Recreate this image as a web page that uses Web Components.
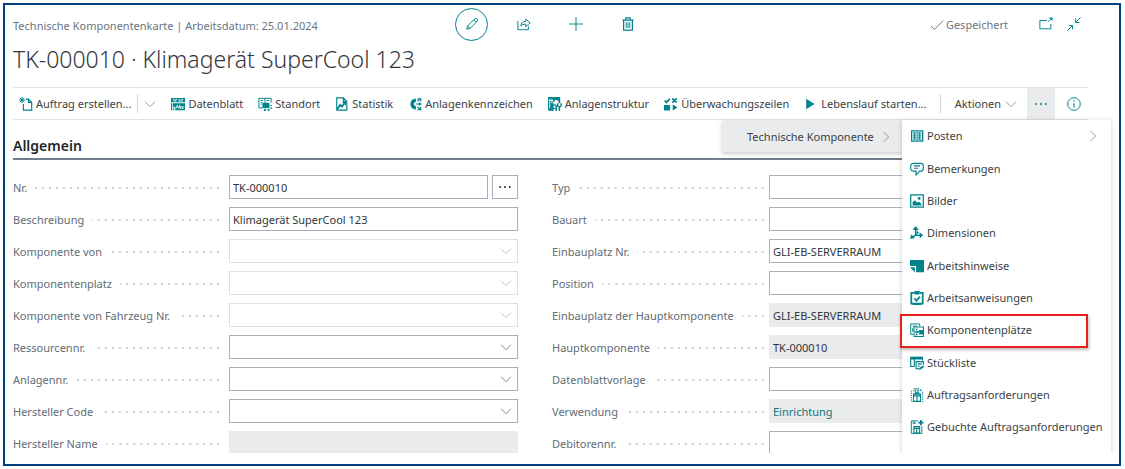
<!DOCTYPE html>
<html lang="de">
<head>
<meta charset="utf-8">
<meta name="viewport" content="width=device-width, initial-scale=1">
<title>Technische Komponentenkarte</title>
<style>
  :root {
    --teal: #00838a;
    --text: #3a3f45;
    --muted: #6a7582;
    --label: #626c77;
    --line: #e0e2e4;
    --shade: #eaebed;
    --border: #a9b0bb;
  }
  body { margin: 3px 4px 3px 3px; background: #fff; color: var(--text); font: 11px/16px "Noto Sans", "Open Sans", sans-serif; }
</style>
</head>
<body>
<bc-card-page>
  <bc-page-header slot="header"></bc-page-header>
  <bc-toolbar slot="toolbar"></bc-toolbar>
  <bc-fast-tab heading="Allgemein">
    <bc-field slot="left" label="Nr." value="TK-000010" kind="assist"></bc-field>
    <bc-field slot="left" label="Beschreibung" value="Klimagerät SuperCool 123"></bc-field>
    <bc-field slot="left" label="Komponente von" kind="lookup" disabled></bc-field>
    <bc-field slot="left" label="Komponentenplatz" kind="lookup" disabled></bc-field>
    <bc-field slot="left" label="Komponente von Fahrzeug Nr." kind="lookup" disabled></bc-field>
    <bc-field slot="left" label="Ressourcennr." kind="lookup"></bc-field>
    <bc-field slot="left" label="Anlagennr." kind="lookup"></bc-field>
    <bc-field slot="left" label="Hersteller Code" kind="lookup"></bc-field>
    <bc-field slot="left" label="Hersteller Name" kind="readonly"></bc-field>
    <bc-field slot="right" label="Typ"></bc-field>
    <bc-field slot="right" label="Bauart"></bc-field>
    <bc-field slot="right" label="Einbauplatz Nr." value="GLI-EB-SERVERRAUM"></bc-field>
    <bc-field slot="right" label="Position"></bc-field>
    <bc-field slot="right" label="Einbauplatz der Hauptkomponente" value="GLI-EB-SERVERRAUM" kind="readonly"></bc-field>
    <bc-field slot="right" label="Hauptkomponente" value="TK-000010" kind="readonly"></bc-field>
    <bc-field slot="right" label="Datenblattvorlage"></bc-field>
    <bc-field slot="right" label="Verwendung" value="Einrichtung" kind="link"></bc-field>
    <bc-field slot="right" label="Debitorennr."></bc-field>
  </bc-fast-tab>
</bc-card-page>

<script>
const ICONS = {
  pencil: '<path class="s" d="M2 14l1-3.800 8.200-8.200a1.600 1.600 0 0 1 2.300 0l.5.5a1.600 1.600 0 0 1 0 2.300L5.800 13zM3 10.200l2.800 2.800M10 3.200l2.800 2.800"/>',
  share: '<path class="s" d="M1 4.500v10h12v-4M4.500 10.500c0-4 2-5.500 5.500-5.500V2.200l5 4.500-5 4.300V8.200c-2.500 0-4.500.5-5.500 2.300z"/>',
  plus: '<path class="s" d="M8 0v16M0 8h16"/>',
  trash: '<path class="s" stroke-width="1.400" d="M1.500 3.500h13M5.500 3.500v-2.500h5v2.500M3 3.500v11.500h10v-11.500"/><path class="s" d="M6 6v6.500M8 6v6.500M10 6v6.500"/>',
  check: '<path class="s" d="M1 9l4 4L15 3"/>',
  popout: '<path class="s" d="M9 4H1v9.500h12.500V8M10.500 5.500L15 1"/><path d="M11.500.5H15.500V4.500z"/>',
  collapse: '<path class="s" d="M15.500.5L10 6M9.700 2v4.300H14M.5 15.500L6 10M2 9.700h4.300V14"/>',
  newdoc: '<path class="s" stroke-width="1.300" d="M8 2.500H10.800L14.500 6.200V15H5V8M10.800 2.500v3.700H14.500"/><path class="s" d="M3.500 0v7M0 3.500h7M1 1l5 5M6 1L1 6"/>',
  datasheet: '<path d="M0 1h16v5H0zM2 7h14v8H5v-4H2z"/><path d="M0 7h1.200v8H0zM2 12h2v1H2zM2 14h2v1H2z"/><path class="w" d="M2 3h2M5 3h2M9 2.500h1.500M12 3h2M3 4.500h3M8.500 4.500h5M6 13l1.300-3.500L8.600 13M10 9v4h1.500v-2H10M14.500 11H13v2h1.500"/>',
  location: '<path class="s" d="M1 1.500h14v5M1 1.500v11h4M8 1.500v5M3 4h3M3 6.500h2M10 4h3M3 9h1"/><path d="M5 6.500h8v6H5zM13.500 9H16v1h-2.500zM7 13.500h2V16H7zM11 13.500h2V16h-2zM14 12h2v1.500h-2z"/>',
  stats: '<path class="s" stroke-width="1.300" d="M9.500 1H2v14h11.500V5zM9.500 1v4h4"/><path class="s" stroke-width="2" d="M2.500 14l3.500-5 2 2 3-4.500"/><path d="M8 5.500H12.500V10z"/>',
  tagcode: '<path class="s" stroke-width="4" d="M9 3.700a4.300 4.300 0 1 0 0 8.600"/><path class="s" stroke-width="1.400" d="M10.500 5l3.500-3M11 2h3.500v3M9 8h5M12.500 6.500L14.500 8l-2 1.500M10.500 11l3.500 3M14.500 11v3.500H11"/>',
  structure: '<path d="M0 0h14v7h-2V4.500L9 3 6 6v3L4 15H0z"/><path class="w" d="M2 2v11M4.500 2v5M1 4h5"/><path class="s" stroke-width="1.600" d="M5.500 16v-5a2 2 0 0 1 4 0v5M4.500 13h4M11 7v3l2 2v4M15 7v3l-2 2"/><path d="M1 15h5v1H1z"/>',
  monitor: '<path class="s" stroke-width="2" d="M.8 4l2 2.200L6.700 2M9.500 1.500l5 5M14.500 1.500l-5 5"/><path d="M0 9h7v6.500H0zM10 8.500L15.500 12 10 15.500z"/>',
  play: '<path d="M2.500 2l9.500 6-9.500 6z"/>',
  chevdown: '<path class="s" d="M1.500 5L8 11.500 14.500 5"/>',
  chevright: '<path class="s" d="M4.500 1L11.500 8l-7 7"/>',
  dots: '<circle cx="2.500" cy="8" r="1.100"/><circle cx="8" cy="8" r="1.100"/><circle cx="13.500" cy="8" r="1.100"/>',
  info: '<circle class="s" cx="8" cy="8" r="7.200"/><path d="M7.400 7h1.300v5H7.400zM7.300 4h1.500v1.500H7.300z"/>',
  entries: '<path class="s" stroke-width="1.500" d="M1.800 2.200h12.700v11.600H1.800z"/><path class="s" d="M8.100 3v10M3.200 4.500h4M3.200 7h4M3.200 9.300h4M3.200 11.600h4M9 4.500h4M9 7h4M9 9.300h4M9 11.600h4M5.200 4v8M11 4v8"/>',
  comment: '<path class="s" stroke-width="1.300" d="M4 1.500h8a3.200 3.200 0 0 1 3.200 3.200v2.600A3.200 3.200 0 0 1 12 10.500h-1L7 15v-4.500H4A3.200 3.200 0 0 1 .8 7.300V4.700A3.200 3.200 0 0 1 4 1.500zM4.500 4.500h7M4.500 7.200h5"/>',
  picture: '<path class="s" stroke-width="1.400" d="M.8 1h14.400v14H.8z"/><path d="M3 13V9.500L5.500 7l3 3 1.500-1.500 3 3V13z"/><circle cx="10.500" cy="5" r="1.600"/>',
  dimensions: '<path class="s" stroke-width="1.800" d="M6.500 3v7.500H13M6.500 10.500L3 13"/><path d="M6.500 0L10 4.500H3zM15 10.500L11 14V7zM0 14.500l1.500-5 4 4.500zM7.500 5.500l3 2-3 2z"/>',
  note: '<path d="M0 1h16v14H7V8H0z"/><path d="M0 9.500h5.500V15z"/>',
  tasks: '<path class="s" stroke-width="2" d="M5 2H1.500v12.500h13V2H11"/><path d="M5 0h6v4H5zM3 14h10v2H3z"/><path class="s" stroke-width="2" d="M5 8.500l2.300 2.500L11.500 6.500"/>',
  places: '<path class="s" d="M3.500 13H.8V1H11v3M3 3.500h5M3 6v4"/><path class="s" stroke-width="1.200" d="M4.600 4.600h10.800v10.800H4.600z"/><path d="M10 8h5v5h-5l1-2.500zM6 6.500h3L7.500 8.500zM6 14h3L7.500 11.500zM6 9h4.500v2H6z"/>',
  bom: '<path class="s" stroke-width="1.300" d="M5 12H.8V1.500h13.400V5M5 2v10"/><path d="M1 1h13v3H1z"/><path class="s" stroke-width="1.300" d="M15.300 10V6.500H7v8h3M9 9h4.500M9 11.500h2"/><path d="M10 16l1-2.500L15 10.500l1 2-4 3z"/>',
  request: '<path class="s" stroke-dasharray="1.500 1" d="M3 15.300H1.500V3M4 .8h7l3.500 3.500v11H13M6 .8v4M9 .8v4M3.500 3h10"/><path class="s" stroke-width="1.300" d="M4 7h8v8.300H4zM4 9h8M8 9v6M6 7V5.500h4V7"/>',
  posted: '<path class="s" d="M9 1H1.500v14.300h12V7M3 3.500h4M4.500 1v4"/><path class="s" stroke-width="1.300" d="M4.500 7.500h6.500v7.500H4.500zM4.500 9.500H11M7.700 9.500V15"/><path class="s" stroke-width="2" d="M12.500 0v6M9.500 3h6"/>',
  list: '<path d="M2 0h8v2H2zM2 4h12v2H2zM2 8h12v8H2z"/>'
};

const define = (tag, css, render) => customElements.define(tag, class extends HTMLElement {
  connectedCallback() {
    if (this.shadowRoot) return;
    const root = this.attachShadow({ mode: 'open' });
    root.innerHTML = `<style>*{box-sizing:border-box}${css}</style>${render(this)}`;
  }
});
const attr = (el, name) => el.getAttribute(name) || '';

define('bc-icon', `
  :host { display: inline-flex; flex: none; width: 14px; height: 14px; color: var(--teal); }
  svg { width: 100%; height: 100%; overflow: visible; fill: currentColor; }
  .s { fill: none; stroke: currentColor; }
  .w { fill: none; stroke: #fff; }
`, el => `<svg viewBox="0 0 16 16" stroke-width="1.100" aria-hidden="true">${ICONS[attr(el, 'name')]}</svg>`);

define('bc-card-page', `
  :host { display: block; height: calc(100vh - 6px); box-sizing: border-box; border: 2px solid #004280; padding-bottom: 11px; }
  main { height: 100%; overflow: hidden; padding: 0 31px 0 8px; }
`, () => `<main><slot name="header"></slot><slot name="toolbar"></slot><slot></slot></main>`);

define('bc-page-header', `
  :host { display: block; }
  .top { display: grid; grid-template-columns: 442px 1fr auto; align-items: center; height: 38px; }
  .crumb { color: var(--muted); padding-top: 4px; }
  .actions { display: flex; align-items: center; gap: 20px; }
  button { display: flex; align-items: center; justify-content: center; width: 32px; height: 32px; padding: 0; border: 0; background: none; }
  button.active { width: 33px; height: 33px; border: 1px solid var(--teal); border-radius: 50%; }
  .status { display: flex; align-items: center; gap: 14px; padding-right: 7px; }
  .saved { display: flex; align-items: center; gap: 2px; color: var(--muted); margin-right: 17px; padding-top: 2px; }
  .saved bc-icon { color: var(--muted); }
  .status button { width: 14px; height: 14px; }
  h1 { margin: 0; height: 44px; font: 300 23px/32px "Noto Sans", "Open Sans", sans-serif; color: #33373c; }
`, () => `
  <div class="top">
    <div class="crumb">Technische Komponentenkarte | Arbeitsdatum: 25.01.2024</div>
    <div class="actions">
      <button class="active" aria-label="Bearbeiten"><bc-icon name="pencil"></bc-icon></button>
      <button aria-label="Teilen"><bc-icon name="share"></bc-icon></button>
      <button aria-label="Neu"><bc-icon name="plus"></bc-icon></button>
      <button aria-label="Löschen"><bc-icon name="trash"></bc-icon></button>
    </div>
    <div class="status">
      <span class="saved"><bc-icon name="check"></bc-icon>Gespeichert</span>
      <button aria-label="In neuem Fenster öffnen"><bc-icon name="popout"></bc-icon></button>
      <button aria-label="Verkleinern"><bc-icon name="collapse"></bc-icon></button>
    </div>
  </div>
  <h1>TK-000010 · Klimagerät SuperCool 123</h1>`);

define('bc-action', `
  :host { display: flex; }
  button { display: flex; align-items: center; gap: 3px; padding: 0; border: 0; background: none; color: inherit; font: inherit; white-space: nowrap; }
`, el => `<button><bc-icon name="${attr(el, 'icon')}"></bc-icon><slot></slot></button>`);

define('bc-toolbar', `
  :host { display: block; position: relative; z-index: 1; }
  nav { display: flex; align-items: stretch; height: 33px; padding-left: 6px; border: solid var(--line); border-width: 1px 0; }
  .actions { display: flex; align-items: center; gap: 15px; }
  .split { display: flex; align-items: center; gap: 6px; }
  .split button, .tail button { display: flex; align-items: center; justify-content: center; border: 0; padding: 0; background: none; color: inherit; font: inherit; }
  .rule { width: 1px; height: 19px; background: #d3d6da; }
  .split bc-icon, .menu bc-icon { width: 12px; height: 12px; color: #7c838c; }
  .split button { width: 12px; }
  .tail { display: flex; align-items: center; margin-left: auto; }
  .tail .menu { gap: 4px; margin: 0 10px 0 14px; }
  .tail .more { width: 28px; align-self: stretch; background: var(--shade); }
  .tail .info { width: 33px; height: 31px; padding-left: 4px; }
`, () => `
  <nav aria-label="Aktionen">
    <div class="actions">
      <div class="split">
        <bc-action icon="newdoc">Auftrag erstellen...</bc-action>
        <span class="rule"></span>
        <button aria-label="Weitere Optionen"><bc-icon name="chevdown"></bc-icon></button>
      </div>
      <bc-action icon="datasheet">Datenblatt</bc-action>
      <bc-action icon="location">Standort</bc-action>
      <bc-action icon="stats">Statistik</bc-action>
      <bc-action icon="tagcode">Anlagenkennzeichen</bc-action>
      <bc-action icon="structure">Anlagenstruktur</bc-action>
      <bc-action icon="monitor">Überwachungszeilen</bc-action>
      <bc-action icon="play">Lebenslauf starten...</bc-action>
    </div>
    <div class="tail">
      <span class="rule"></span>
      <button class="menu">Aktionen<bc-icon name="chevdown"></bc-icon></button>
      <button class="more" aria-label="Mehr Optionen" aria-expanded="true"><bc-icon name="dots"></bc-icon></button>
      <button class="info" aria-label="Info"><bc-icon name="info"></bc-icon></button>
    </div>
  </nav>
  <bc-flyout></bc-flyout>`);

define('bc-flyout', `
  :host { position: absolute; top: 33px; right: -23px; display: flex; align-items: flex-start; }
  .parent { display: flex; align-items: center; gap: 6px; width: 180px; height: 32px; padding: 2px 13px 0 25px; border: 0; background: var(--shade); color: inherit; font: inherit; white-space: nowrap; box-shadow: 0 2px 4px #0003; }
  .parent bc-icon { width: 12px; height: 12px; color: #7c838c; }
  .menu { position: relative; display: grid; grid-template-columns: 100%; grid-auto-rows: 1fr; width: 209px; min-height: 356px; background: #fff; box-shadow: 0 1px 5px #0003; }
`, () => `
  <button class="parent">Technische Komponente<bc-icon name="chevright"></bc-icon></button>
  <div class="menu">
    <bc-menu-item icon="entries" submenu>Posten</bc-menu-item>
    <bc-menu-item icon="comment">Bemerkungen</bc-menu-item>
    <bc-menu-item icon="picture">Bilder</bc-menu-item>
    <bc-menu-item icon="dimensions">Dimensionen</bc-menu-item>
    <bc-menu-item icon="note">Arbeitshinweise</bc-menu-item>
    <bc-menu-item icon="tasks">Arbeitsanweisungen</bc-menu-item>
    <bc-menu-item icon="places" marked>Komponentenplätze</bc-menu-item>
    <bc-menu-item icon="bom">Stückliste</bc-menu-item>
    <bc-menu-item icon="request">Auftragsanforderungen</bc-menu-item>
    <bc-menu-item icon="posted">Gebuchte Auftragsanforderungen</bc-menu-item>
    <bc-menu-item icon="list"></bc-menu-item>
  </div>`);

define('bc-menu-item', `
  :host { position: relative; display: flex; }
  button { flex: 1; display: flex; align-items: center; gap: 3px; padding: 0 6px 0 8px; border: 0; background: none; color: inherit; font: inherit; text-align: left; white-space: nowrap; }
  .more { width: 12px; height: 12px; margin: 0 6px 0 auto; color: #7c838c; }
  :host([marked])::after { content: ""; position: absolute; inset: 0 23px -1px -2px; border: 2px solid #e8201c; box-shadow: 1px 2px 3px #0004; }
`, el => `<button><bc-icon name="${attr(el, 'icon')}"></bc-icon><slot></slot>${el.hasAttribute('submenu') ? '<bc-icon class="more" name="chevright"></bc-icon>' : ''}</button>`);

define('bc-fast-tab', `
  :host { display: block; }
  h2 { margin: 0; padding-top: 16px; height: 40px; border-bottom: 2px solid #717c8c; font: 600 14px/20px "Noto Sans", "Open Sans", sans-serif; color: #22262b; }
  .grid { display: grid; grid-template-columns: 1fr 1fr; gap: 34px; padding: 15px 31px 0 0; }
  .col { display: grid; gap: 8px; align-content: start; }
  .left { --label-gap: 10px; }
  .right { --label-gap: 5px; --label-width: 212px; }
`, el => `
  <h2>${attr(el, 'heading')}</h2>
  <div class="grid">
    <div class="col left"><slot name="left"></slot></div>
    <div class="col right"><slot name="right"></slot></div>
  </div>`);

define('bc-field', `
  :host { display: grid; grid-template-columns: var(--label-width, 206px) 1fr; gap: var(--label-gap); height: 24px; }
  .caption { display: flex; align-items: center; gap: 8px; padding-top: 2px; }
  label { color: var(--label); white-space: nowrap; }
  .leader { flex: 1; height: 2px; background: linear-gradient(90deg, #0000 5px, #cdd1d5 5px) right / 7px 2px repeat-x; }
  .control { display: flex; gap: 4px; min-width: 0; position: relative; }
  input, select, .link { flex: 1; min-width: 0; height: 24px; margin: 0; padding: 1px 3px 0; border: 1px solid var(--border); border-radius: 0; background: #fff; color: #30353a; font: inherit; appearance: none; }
  select:disabled { border-color: #dcdfe3; opacity: 1; }
  input[readonly], .link { border-color: var(--shade); background: var(--shade); }
  .link { padding-top: 4px; line-height: 16px; }
  a { color: #14767c; text-decoration: none; }
  .assist { width: 26px; padding: 0; border: 1px solid var(--border); background: #fff; display: flex; align-items: center; justify-content: center; }
  .assist bc-icon { color: #222; width: 14px; height: 14px; }
  .chev { position: absolute; right: 6px; top: 6px; width: 12px; height: 12px; color: #666d75; pointer-events: none; }
  :host([disabled]) .chev { color: #b4b9bf; }
`, el => {
  const kind = attr(el, 'kind'), value = attr(el, 'value');
  const control = kind === 'lookup'
    ? `<select id="c"${el.hasAttribute('disabled') ? ' disabled' : ''}><option></option></select><bc-icon class="chev" name="chevdown"></bc-icon>`
    : kind === 'link'
    ? `<div class="link"><a id="c" href="#verwendung">${value}</a></div>`
    : `<input id="c" type="text" value="${value}"${kind === 'readonly' ? ' readonly' : ''}>`;
  return `<div class="caption"><label for="c">${attr(el, 'label')}</label><span class="leader"></span></div>
  <div class="control">${control}${kind === 'assist' ? '<button class="assist" aria-label="Nummer auswählen"><bc-icon name="dots"></bc-icon></button>' : ''}</div>`;
});
</script>
</body>
</html>
